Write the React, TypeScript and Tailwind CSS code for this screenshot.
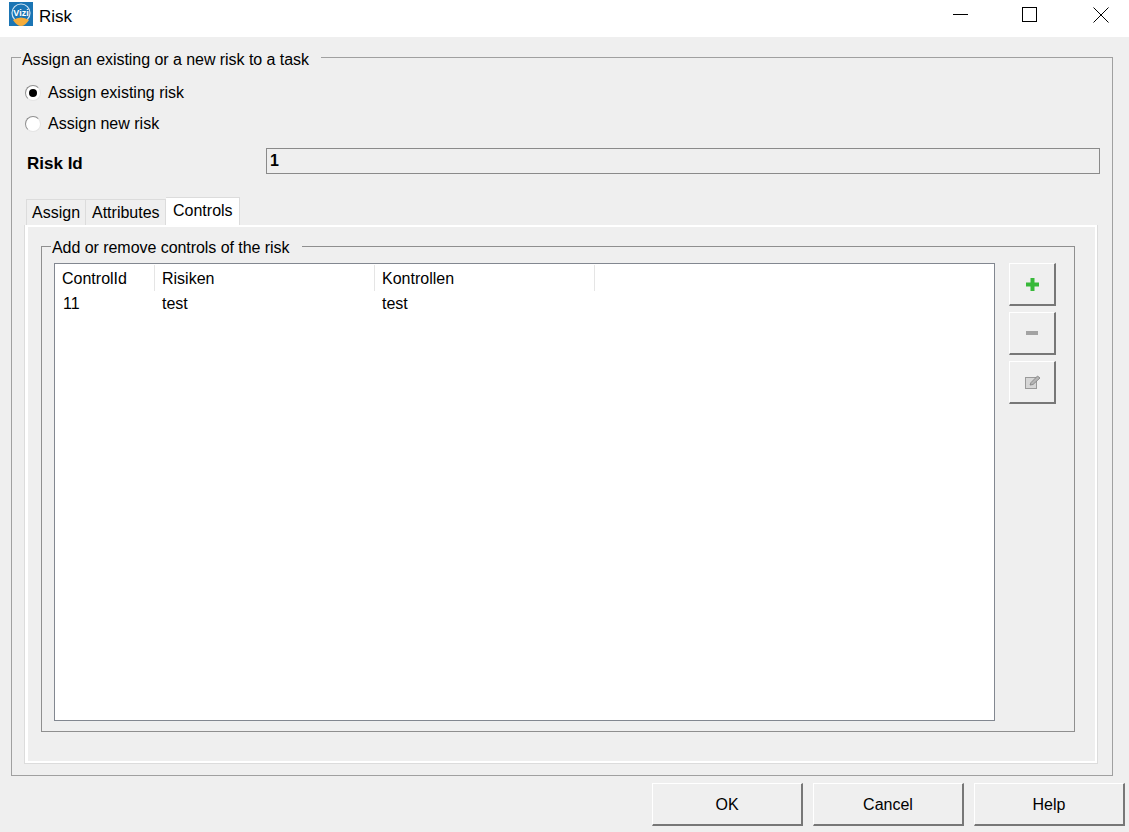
import React from "react"

const columns = [
  { title: "ControlId", width: "w-[100px]" },
  { title: "Risiken", width: "w-[220px]" },
  { title: "Kontrollen", width: "w-[220px]" },
]

const Radio = ({ label, checked }: { label: string; checked?: boolean }) => (
  <div className="flex items-center h-[20px]">
    <span className="w-[16px] h-[16px] rounded-full bg-white border border-[#8f8f8f] border-b-[#e4e4e4] border-r-[#e4e4e4] flex items-center justify-center">
      {checked && <span className="w-[8px] h-[8px] rounded-full bg-black" />}
    </span>
    <span className="ml-[7px]">{label}</span>
  </div>
)

const RaisedButton = ({ className, children }: { className: string; children: React.ReactNode }) => (
  <button
    type="button"
    className={`flex items-center justify-center bg-[#efefef] border-t border-l border-white border-r-2 border-b-2 border-r-[#777777] border-b-[#777777] ${className}`}
  >
    {children}
  </button>
)

export default function App() {
  return (
    <div className="w-[1129px] h-[832px] bg-[#efefef] overflow-hidden text-[16px] leading-[18px] text-black font-['Liberation_Sans',Arial,sans-serif]">
      {/* Title bar */}
      <div className="h-[37px] bg-white flex items-center">
        <svg className="ml-[9px] mb-[9px]" width="24" height="24" viewBox="0 0 24 24">
          <rect width="24" height="24" fill="#1b75b4" />
          <circle cx="12" cy="11" r="9" fill="none" stroke="#cfe3f1" strokeWidth="1.2" />
          <path d="M4 18 Q12 13 20 18 Q16 24 12 24 Q8 24 4 18 Z" fill="#f5ad3c" />
          <text x="12" y="14" textAnchor="middle" fontSize="9" fontWeight="700" fill="#ffffff" fontFamily="Liberation Sans">Vizi</text>
        </svg>
        <span className="ml-[6px] mb-[4px] text-[17px]">Risk</span>
        <div className="ml-auto pb-[8px] flex items-center">
          <svg width="15" height="15" viewBox="0 0 15 15" className="mr-[54px]">
            <path d="M0 7.5H15" stroke="#000" />
          </svg>
          <svg width="15" height="15" viewBox="0 0 15 15" className="mr-[56px]">
            <rect x="0.5" y="0.5" width="14" height="14" fill="none" stroke="#000" />
          </svg>
          <svg width="16" height="16" viewBox="0 0 16 16" className="mr-[20px]">
            <path d="M0.5 0.5L15.5 15.5M15.5 0.5L0.5 15.5" stroke="#000" />
          </svg>
        </div>
      </div>

      {/* Main group */}
      <fieldset className="mt-[8px] ml-[11px] w-[1102px] h-[731px] border border-[#a0a0a0] px-[13px]">
        <legend className="-ml-[4px] pl-px pr-[12px] pt-[6px] tracking-[-0.05px]">Assign an existing or a new risk to a task</legend>

        <div className="mt-[14px] flex flex-col gap-[11px]">
          <Radio label="Assign existing risk" checked />
          <Radio label="Assign new risk" />
        </div>

        <div className="mt-[14px] flex items-center">
          <span className="ml-[2px] w-[239px] pt-[5px] font-bold text-[17px]">Risk Id</span>
          <div className="w-[834px] h-[26px] -mr-[2px] border border-[#8a8a8a] pl-[3px] flex items-center font-bold">1</div>
        </div>

        {/* Tabs */}
        <div className="mt-[23px] ml-px flex items-end h-[28px]">
          <div className="w-[60px] h-[26px] border-t border-l border-r border-[#dcdcdc] pl-[5px] pt-[4px]">Assign</div>
          <div className="w-[80px] h-[26px] border-t border-r border-[#dcdcdc] pl-[6px] pt-[4px]">Attributes</div>
          <div className="w-[74px] h-[28px] border-t border-r border-[#dcdcdc] bg-white pl-[7px] pt-[4px]">Controls</div>
        </div>

        {/* Tab panel */}
        <div className="w-[1074px] h-[539px] -ml-px border-l border-r border-b border-[#dcdcdc]">
          <div className="h-full border-l-[3px] border-t-[2px] border-r-[2px] border-b-[2px] border-white pl-[13px]">
            <fieldset className="mt-[8px] w-[1034px] h-[497px] border border-[#8f8f8f] pl-[12px]">
              <legend className="-ml-[3px] pl-px pr-[12px] pt-[4px] tracking-[-0.05px]">Add or remove controls of the risk</legend>
              <div className="flex gap-[14px] mt-[6px]">
                <div className="w-[941px] h-[458px] bg-white border border-[#828790]">
                  <div className="flex h-[27px] pt-[1px]">
                    {columns.map(c => (
                      <div key={c.title} className={`${c.width} pl-[7px] pt-[5px] border-r border-[#e5e5e5]`}>
                        {c.title}
                      </div>
                    ))}
                  </div>
                  <div className="flex h-[24px] pt-px">
                    <div className="w-[100px] pl-[8px] pt-[3px]">11</div>
                    <div className="w-[220px] pl-[7px] pt-[3px]">test</div>
                    <div className="w-[220px] pl-[7px] pt-[3px]">test</div>
                  </div>
                </div>
                <div className="flex flex-col gap-[6px]">
                  <RaisedButton className="w-[47px] h-[43px]">
                    <svg width="13" height="13" viewBox="0 0 13 13">
                      <path d="M4.5 0H8.5V4.5H13V8.5H8.5V13H4.5V8.5H0V4.5H4.5Z" fill="#38b93a" />
                    </svg>
                  </RaisedButton>
                  <RaisedButton className="w-[47px] h-[43px]">
                    <span className="w-[12px] h-[4px] bg-[#a3a3a3]" />
                  </RaisedButton>
                  <RaisedButton className="w-[47px] h-[43px]">
                    <svg width="16" height="14" viewBox="0 0 16 14" className="ml-px">
                      <rect x="0.5" y="2.5" width="11" height="11" fill="#d6d6d6" stroke="#9a9a9a" />
                      <path d="M5 10L6 7.5L12.5 1L15 3L8 9.5Z" fill="#b5b5b5" stroke="#7d7d7d" strokeWidth="0.8" />
                    </svg>
                  </RaisedButton>
                </div>
              </div>
            </fieldset>
          </div>
        </div>
      </fieldset>

      {/* Dialog buttons */}
      <div className="mt-[7px] ml-[652px] flex gap-[10px]">
        {["OK", "Cancel", "Help"].map(label => (
          <RaisedButton key={label} className="w-[151px] h-[43px] pt-px">{label}</RaisedButton>
        ))}
      </div>
    </div>
  )
}
